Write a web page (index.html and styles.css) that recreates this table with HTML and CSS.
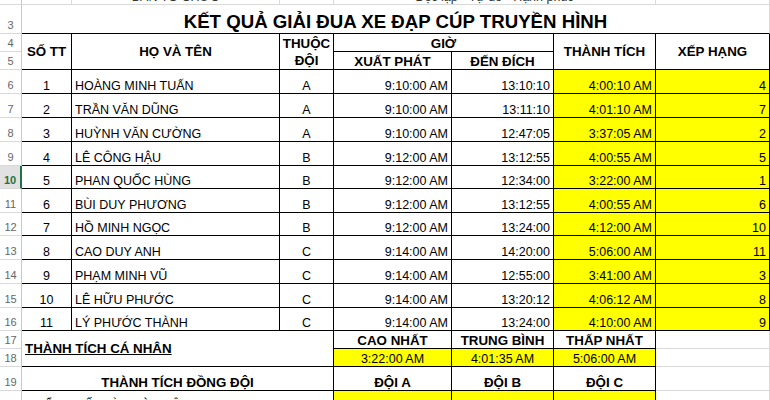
FILE: index.html
```html
<!DOCTYPE html>
<html lang="vi">
<head>
<meta charset="utf-8">
<title>Kết quả giải đua xe đạp</title>
<link rel="stylesheet" href="styles.css">
</head>
<body>
<div class="sheet">
  <!-- row 2 -->
  <div class="c rh">2</div>
  <div class="c"></div>
  <div class="c ctr top">BAN TỔ CHỨC</div>
  <div class="c"></div>
  <div class="c ctr top s3">Độc lập - Tự do - Hạnh phúc</div>
  <div class="c"></div>

  <!-- row 3 -->
  <div class="c rh">3</div>
  <div class="c title s7 bb">KẾT QUẢ GIẢI ĐUA XE ĐẠP CÚP TRUYỀN HÌNH</div>

  <!-- row 4-5 -->
  <div class="c rh">4</div>
  <div class="c hd b ctr mid r2">SỐ TT</div>
  <div class="c hd b ctr mid r2">HỌ VÀ TÊN</div>
  <div class="c hd b ctr mid r2 wrap">THUỘC<br>ĐỘI</div>
  <div class="c hd b ctr s2">GIỜ</div>
  <div class="c hd b ctr mid r2">THÀNH TÍCH</div>
  <div class="c hd b ctr mid r2">XẾP HẠNG</div>
  <div class="c rh">5</div>
  <div class="c hd b ctr">XUẤT PHÁT</div>
  <div class="c hd b ctr">ĐẾN ĐÍCH</div>

  <!-- data rows -->
  <div class="c rh">6</div><div class="c b ctr">1</div><div class="c b">HOÀNG MINH TUẤN</div><div class="c b ctr">A</div><div class="c b rt">9:10:00 AM</div><div class="c b rt">13:10:10</div><div class="c b rt y">4:00:10 AM</div><div class="c b rt y">4</div>
  <div class="c rh">7</div><div class="c b ctr">2</div><div class="c b">TRẦN VĂN DŨNG</div><div class="c b ctr">A</div><div class="c b rt">9:10:00 AM</div><div class="c b rt">13:11:10</div><div class="c b rt y">4:01:10 AM</div><div class="c b rt y">7</div>
  <div class="c rh">8</div><div class="c b ctr">3</div><div class="c b">HUỲNH VĂN CƯỜNG</div><div class="c b ctr">A</div><div class="c b rt">9:10:00 AM</div><div class="c b rt">12:47:05</div><div class="c b rt y">3:37:05 AM</div><div class="c b rt y">2</div>
  <div class="c rh">9</div><div class="c b ctr">4</div><div class="c b">LÊ CÔNG HẬU</div><div class="c b ctr">B</div><div class="c b rt">9:12:00 AM</div><div class="c b rt">13:12:55</div><div class="c b rt y">4:00:55 AM</div><div class="c b rt y">5</div>
  <div class="c rh sel">10</div><div class="c b ctr">5</div><div class="c b">PHAN QUỐC HÙNG</div><div class="c b ctr">B</div><div class="c b rt">9:12:00 AM</div><div class="c b rt">12:34:00</div><div class="c b rt y">3:22:00 AM</div><div class="c b rt y">1</div>
  <div class="c rh">11</div><div class="c b ctr">6</div><div class="c b">BÙI DUY PHƯƠNG</div><div class="c b ctr">B</div><div class="c b rt">9:12:00 AM</div><div class="c b rt">13:12:55</div><div class="c b rt y">4:00:55 AM</div><div class="c b rt y">6</div>
  <div class="c rh">12</div><div class="c b ctr">7</div><div class="c b">HỒ MINH NGỌC</div><div class="c b ctr">B</div><div class="c b rt">9:12:00 AM</div><div class="c b rt">13:24:00</div><div class="c b rt y">4:12:00 AM</div><div class="c b rt y">10</div>
  <div class="c rh">13</div><div class="c b ctr">8</div><div class="c b">CAO DUY ANH</div><div class="c b ctr">C</div><div class="c b rt">9:14:00 AM</div><div class="c b rt">14:20:00</div><div class="c b rt y">5:06:00 AM</div><div class="c b rt y">11</div>
  <div class="c rh">14</div><div class="c b ctr">9</div><div class="c b">PHẠM MINH VŨ</div><div class="c b ctr">C</div><div class="c b rt">9:14:00 AM</div><div class="c b rt">12:55:00</div><div class="c b rt y">3:41:00 AM</div><div class="c b rt y">3</div>
  <div class="c rh">15</div><div class="c b ctr">10</div><div class="c b">LÊ HỮU PHƯỚC</div><div class="c b ctr">C</div><div class="c b rt">9:14:00 AM</div><div class="c b rt">13:20:12</div><div class="c b rt y">4:06:12 AM</div><div class="c b rt y">8</div>
  <div class="c rh">16</div><div class="c b ctr">11</div><div class="c b">LÝ PHƯỚC THÀNH</div><div class="c b ctr">C</div><div class="c b rt">9:14:00 AM</div><div class="c b rt">13:24:00</div><div class="c b rt y">4:10:00 AM</div><div class="c b rt y">9</div>

  <!-- row 17-18 -->
  <div class="c rh">17</div>
  <div class="c hd b s3 r2 mid"><span class="ul">THÀNH TÍCH CÁ NHÂN</span></div>
  <div class="c hd b ctr">CAO NHẤT</div>
  <div class="c hd b ctr">TRUNG BÌNH</div>
  <div class="c hd b ctr">THẤP NHẤT</div>
  <div class="c"></div>
  <div class="c rh">18</div>
  <div class="c b ctr y">3:22:00 AM</div>
  <div class="c b ctr y">4:01:35 AM</div>
  <div class="c b ctr y">5:06:00 AM</div>
  <div class="c"></div>

  <!-- row 19 -->
  <div class="c rh">19</div>
  <div class="c hd b s3 ctr">THÀNH TÍCH ĐỒNG ĐỘI</div>
  <div class="c hd b ctr">ĐỘI A</div>
  <div class="c hd b ctr">ĐỘI B</div>
  <div class="c hd b ctr">ĐỘI C</div>
  <div class="c"></div>

  <!-- row 20 -->
  <div class="c rh">20</div>
  <div class="c b s3 indent">TỔNG SỐ GIỜ TOÀN ĐỘI</div>
  <div class="c b y"></div>
  <div class="c b y"></div>
  <div class="c b y"></div>
  <div class="c"></div>
</div>
</body>
</html>
```
FILE: styles.css
```css
html, body {
  margin: 0;
  padding: 0;
  background: #ffffff;
  overflow: hidden;
}

body {
  width: 770px;
  height: 400px;
  font-family: "Liberation Sans", Arial, sans-serif;
  color: #000;
}

.sheet {
  display: grid;
  grid-template-columns: 22px 50px 208px 54px 118px 102px 102px 114px;
  grid-template-rows: 5px 29px 18px 18px 24px 24px 24px 24px 23px 24px 23px 24px 24px 24px 23px 18px 18px 24px 24px;
}

.c {
  box-sizing: border-box;
  display: flex;
  align-items: flex-end;
  justify-content: flex-start;
  overflow: hidden;
  white-space: nowrap;
  padding: 0 3px;
  font-size: 12.5px;
  line-height: 14px;
  border-right: 1px solid #d9d9d9;
  border-bottom: 1px solid #d9d9d9;
  background: #ffffff;
}

.rh {
  justify-content: center;
  padding: 0 0 1px 0;
  font-size: 11px;
  line-height: 13px;
  color: #666666;
  border-right-color: #c8c8c8;
}

.rh.sel {
  background: #e1e1e1;
  color: #217346;
  font-weight: bold;
  border-right: 2px solid #217346;
}

.b {
  border-right-color: #000;
  border-bottom-color: #000;
}

.bb {
  border-bottom-color: #000;
}

.y {
  background: #ffff00;
}

.ctr { justify-content: center; }
.rt { justify-content: flex-end; }
.mid { align-items: center; }

.r2 { grid-row: span 2; }
.s2 { grid-column: span 2; }
.s3 { grid-column: span 3; }
.s7 { grid-column: span 7; }

.top {
  color: #333;
}

.hd {
  font-weight: bold;
  font-size: 13.33px;
  line-height: 15px;
}

.wrap {
  white-space: normal;
  text-align: center;
  line-height: 17px;
}

.title {
  justify-content: center;
  font-weight: bold;
  font-size: 18.67px;
  line-height: 22px;
  padding-bottom: 0;
}

.ul {
  text-decoration: underline;
}

.indent {
  padding-left: 14px;
  padding-bottom: 2px;
}
```
